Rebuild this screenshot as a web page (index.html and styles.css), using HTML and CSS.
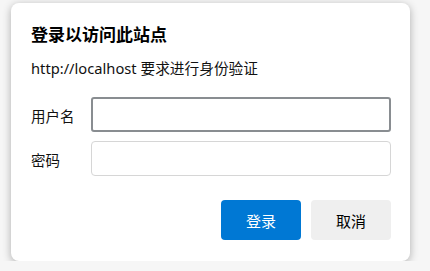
FILE: index.html
```html
<!DOCTYPE html>
<html lang="zh-CN">
<head>
<meta charset="utf-8">
<title>登录</title>
<link rel="stylesheet" href="styles.css">
</head>
<body>
<div class="dialog">
  <h1 class="title">登录以访问此站点</h1>
  <p class="subtitle">http://localhost 要求进行身份验证</p>
  <div class="form">
    <label class="label" for="user">用户名</label>
    <input class="field field-focus" id="user" type="text">
    <label class="label" for="pass">密码</label>
    <input class="field" id="pass" type="password">
  </div>
  <div class="actions">
    <button class="btn btn-primary">登录</button>
    <button class="btn btn-secondary">取消</button>
  </div>
</div>
</body>
</html>
```
FILE: styles.css
```css
html, body {
  margin: 0;
  padding: 0;
  background: #f6f6f6;
}
body {
  padding: 3px 0 0 11px;
  font-family: "Noto Sans", "Noto Sans CJK SC", sans-serif;
  color: #1a1a1a;
}
.dialog {
  box-sizing: border-box;
  width: 399px;
  height: 258px;
  background: #fff;
  border-radius: 8px;
  box-shadow: 0 2px 8px rgba(0, 0, 0, 0.3);
  padding: 20px 19px 0 20px;
}
.title {
  margin: 0;
  font-size: 17px;
  line-height: 24px;
  font-weight: 700;
  color: #000;
}
.subtitle {
  margin: 11px 0 0 0;
  font-size: 14.7px;
  line-height: 20px;
  color: #111;
}
.form {
  margin-top: 19px;
  display: grid;
  grid-template-columns: 60px 300px;
  row-gap: 9px;
  align-items: center;
}
.label {
  font-size: 14.5px;
  line-height: 20px;
  color: #111;
  position: relative;
  top: 1px;
}
.field {
  box-sizing: border-box;
  width: 300px;
  height: 35px;
  margin: 0;
  border: 1px solid #d6d6d6;
  border-radius: 4px;
  background: #fff;
  outline: none;
}
.field-focus {
  border: 2px solid #898d91;
  border-radius: 3px;
}
.actions {
  margin-top: 24px;
  display: flex;
  justify-content: flex-end;
  gap: 10px;
}
.btn {
  width: 80px;
  height: 40px;
  border: none;
  border-radius: 4px;
  font-family: "Noto Sans CJK SC", sans-serif;
  font-size: 15px;
  padding: 0;
}
.btn-primary {
  background: #0078d4;
  color: #fff;
}
.btn-secondary {
  background: #efefef;
  color: #000;
}
```
